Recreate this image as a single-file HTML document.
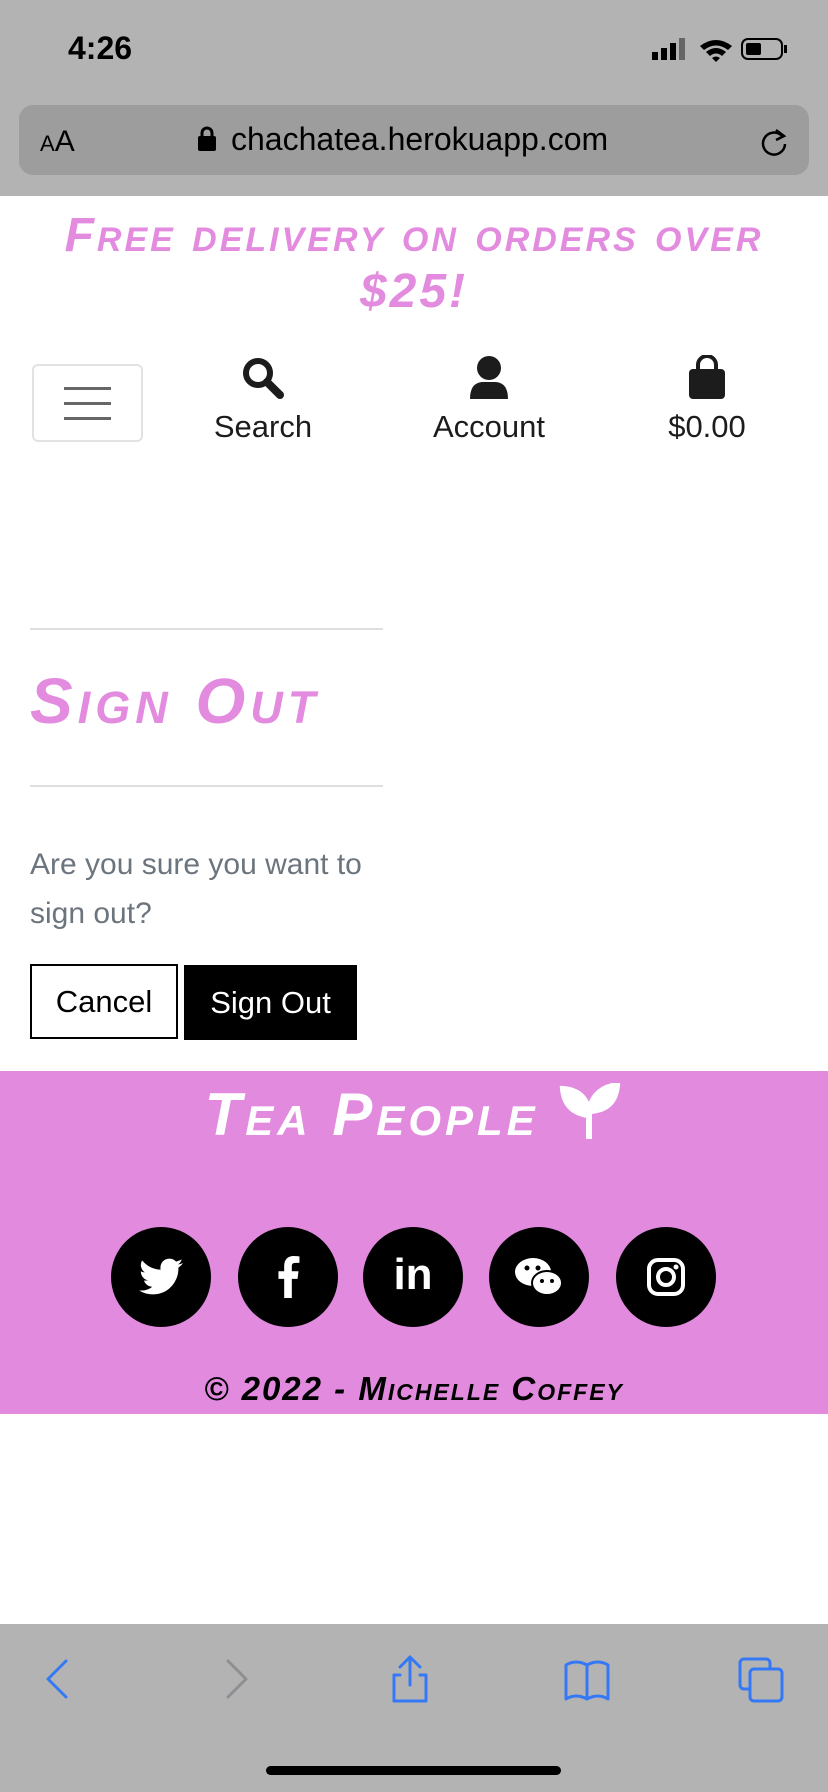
<!DOCTYPE html>
<html><head><meta charset="utf-8"><style>
*{margin:0;padding:0;box-sizing:border-box}
body{width:828px;height:1792px;position:relative;background:#fff;font-family:"Liberation Sans",sans-serif;overflow:hidden}
.a{position:absolute}
.marker{font-family:"Liberation Sans",sans-serif;font-weight:bold;font-style:italic;font-variant:small-caps}
.circ{position:absolute;top:1227px;width:100px;height:100px;border-radius:50%;background:#000;display:flex;align-items:center;justify-content:center}
</style></head><body>
<div class="a" style="left:0;top:0;width:828px;height:196px;background:#b3b3b3"></div>
<div class="a" style="left:68px;top:30px;font-size:32px;font-weight:bold;color:#000">4:26</div>
<svg class="a" style="left:652px;top:36px" width="140" height="30">
<rect x="0" y="16" width="6" height="8" fill="#000"/><rect x="9" y="12" width="6" height="12" fill="#000"/><rect x="18" y="7" width="6" height="17" fill="#000"/><rect x="27" y="2" width="6" height="22" fill="#666"/>
<path d="M48 10 Q64 -2 80 10 L76 14 Q64 5 52 14Z M54 16 Q64 8 74 16 L70 20 Q64 15 58 20Z M60 22 L64 26 L68 22 Q64 19 60 22Z" fill="#000"/>
<rect x="90" y="3" width="40" height="20" rx="6" fill="none" stroke="#000" stroke-width="2"/><rect x="94" y="7" width="15" height="12" rx="2" fill="#000"/><rect x="132" y="9" width="3" height="8" fill="#000"/>
</svg>
<div class="a" style="left:19px;top:105px;width:790px;height:70px;border-radius:14px;background:#9d9d9d"></div>
<div class="a" style="left:40px;top:125px;font-size:30px;color:#000"><span style="font-size:22px">A</span>A</div>
<svg class="a" style="left:197px;top:126px" width="20" height="26"><rect x="1" y="10" width="18" height="15" rx="2" fill="#000"/><path d="M5 11V7a5 5 0 0 1 10 0v4" fill="none" stroke="#000" stroke-width="3"/></svg>
<div class="a" style="left:231px;top:121px;font-size:32px;color:#000">chachatea.herokuapp.com</div>
<svg class="a" style="left:758px;top:126px" width="32" height="32"><path d="M24 10 A11 11 0 1 0 27 18" fill="none" stroke="#000" stroke-width="2.5"/><path d="M18 4 L26 10 L18 14" fill="none" stroke="#000" stroke-width="2.5"/></svg>

<div class="a marker" style="left:0;width:828px;top:208px;text-align:center;color:#e38bdf;font-size:48px;line-height:56px;letter-spacing:3px">Free delivery on orders over<br>$25!</div>

<div class="a" style="left:32px;top:364px;width:111px;height:78px;border:2px solid #e2e2e2;border-radius:6px"></div>
<div class="a" style="left:64px;top:387px;width:47px;height:3px;background:#666;box-shadow:0 15px 0 #666,0 30px 0 #666"></div>
<svg class="a" style="left:240px;top:355px" width="46" height="46"><circle cx="18" cy="18" r="12" fill="none" stroke="#1c1c1c" stroke-width="6"/><path d="M27 27 L40 40" stroke="#1c1c1c" stroke-width="8" stroke-linecap="round"/></svg>
<div class="a" style="left:183px;width:160px;top:409px;text-align:center;font-size:31px;color:#1c1c1c">Search</div>
<svg class="a" style="left:468px;top:355px" width="42" height="46"><circle cx="21" cy="13" r="12" fill="#1c1c1c"/><path d="M2 44 Q2 28 14 27 L28 27 Q40 28 40 44Z" fill="#1c1c1c"/></svg>
<div class="a" style="left:409px;width:160px;top:409px;text-align:center;font-size:31px;color:#1c1c1c">Account</div>
<svg class="a" style="left:688px;top:355px" width="38" height="46"><path d="M10 14 V10 a9 9 0 0 1 18 0 V14" fill="none" stroke="#1c1c1c" stroke-width="4"/><rect x="1" y="14" width="36" height="30" rx="4" fill="#1c1c1c"/></svg>
<div class="a" style="left:627px;width:160px;top:409px;text-align:center;font-size:31px;color:#1c1c1c">$0.00</div>

<div class="a" style="left:30px;top:628px;width:353px;height:2px;background:#dedede"></div>
<div class="a marker" style="left:30px;top:664px;font-size:64px;letter-spacing:5px;color:#e38bdf">Sign Out</div>
<div class="a" style="left:30px;top:785px;width:353px;height:2px;background:#dedede"></div>
<div class="a" style="left:30px;top:840px;font-size:30px;line-height:49px;color:#6c757d">Are you sure you want to<br>sign out?</div>
<div class="a" style="left:30px;top:964px;width:148px;height:75px;border:2px solid #000;font-size:31px;line-height:71px;text-align:center;color:#000">Cancel</div>
<div class="a" style="left:184px;top:965px;width:173px;height:75px;background:#000;font-size:31px;line-height:75px;text-align:center;color:#fff">Sign Out</div>

<div class="a" style="left:0;top:1071px;width:828px;height:343px;background:#e18ade"></div>
<div class="a marker" style="left:0;width:828px;top:1080px;text-align:center;font-size:60px;letter-spacing:4px;color:#fff">Tea People <svg width="64" height="58" style="vertical-align:-6px"><path d="M30 56 V32 Q28 8 4 6 Q6 28 28 32 M30 32 Q32 6 58 2 Q56 26 32 28" fill="#fff" stroke="#fff" stroke-width="6"/></svg></div>
<div class="circ" style="left:111px"><svg width="44" height="38" viewBox="0 0 24 20"><path d="M24 2.4a10 10 0 0 1-2.8.8A5 5 0 0 0 23.3.4a10 10 0 0 1-3.1 1.2A4.9 4.9 0 0 0 11.8 6 14 14 0 0 1 1.700.9a4.9 4.9 0 0 0 1.5 6.6 5 5 0 0 1-2.2-.6 4.9 4.9 0 0 0 3.9 4.9 5 5 0 0 1-2.2.1 4.9 4.9 0 0 0 4.6 3.4A9.9 9.9 0 0 1 0 17.3 14 14 0 0 0 7.5 19.5c9 0 14-7.5 14-14v-.6A10 10 0 0 0 24 2.4z" fill="#fff"/></svg></div>
<div class="circ" style="left:238px"><svg width="24" height="42" viewBox="0 0 12 22"><path d="M8 22V12h3l.5-4H8V5.5C8 4.4 8.300 3.6 9.9 3.6H12V.2A25 25 0 0 0 9 0C6 0 4 1.8 4 5.2V8H1v4h3v10z" fill="#fff"/></svg></div>
<div class="circ" style="left:363px"><div style="color:#fff;font-size:44px;font-weight:bold;margin-top:-4px">in</div></div>
<div class="circ" style="left:489px"><svg width="50" height="42" viewBox="0 0 50 42"><ellipse cx="19" cy="16" rx="18" ry="14" fill="#fff"/><ellipse cx="33" cy="27" rx="15" ry="12" fill="#fff" stroke="#000" stroke-width="2"/><circle cx="13" cy="12" r="2.5"/><circle cx="24" cy="12" r="2.5"/><circle cx="28" cy="25" r="2"/><circle cx="38" cy="25" r="2"/></svg></div>
<div class="circ" style="left:616px"><svg width="40" height="40" viewBox="0 0 40 40"><rect x="3" y="3" width="34" height="34" rx="9" fill="none" stroke="#fff" stroke-width="4"/><circle cx="20" cy="20" r="8" fill="none" stroke="#fff" stroke-width="4"/><circle cx="30" cy="10" r="2.5" fill="#fff"/></svg></div>
<div class="a marker" style="left:0;width:828px;top:1370px;text-align:center;font-size:33px;letter-spacing:2px;color:#000">© 2022 - Michelle Coffey</div>

<div class="a" style="left:0;top:1624px;width:828px;height:168px;background:#b3b3b3"></div>
<svg class="a" style="left:0;top:1655px" width="828" height="50" fill="none" stroke-width="3" stroke-linecap="round" stroke-linejoin="round">
<path d="M66 6 L48 24 L66 42" stroke="#3478f6"/>
<path d="M228 6 L246 24 L228 42" stroke="#8e8e93"/>
<g stroke="#3478f6"><path d="M410 2 V30 M400 12 L410 2 L420 12 M400 20 H394 V46 H426 V20 H420"/>
<path d="M566 10 Q576 4 587 10 Q598 4 608 10 V44 Q598 38 587 44 Q576 38 566 44Z M587 10 V44"/>
<rect x="740" y="4" width="30" height="30" rx="4"/><rect x="750" y="14" width="32" height="32" rx="4" fill="#b3b3b3"/></g>
</svg>
<div class="a" style="left:266px;top:1766px;width:295px;height:9px;border-radius:5px;background:#000"></div>
</body></html>
